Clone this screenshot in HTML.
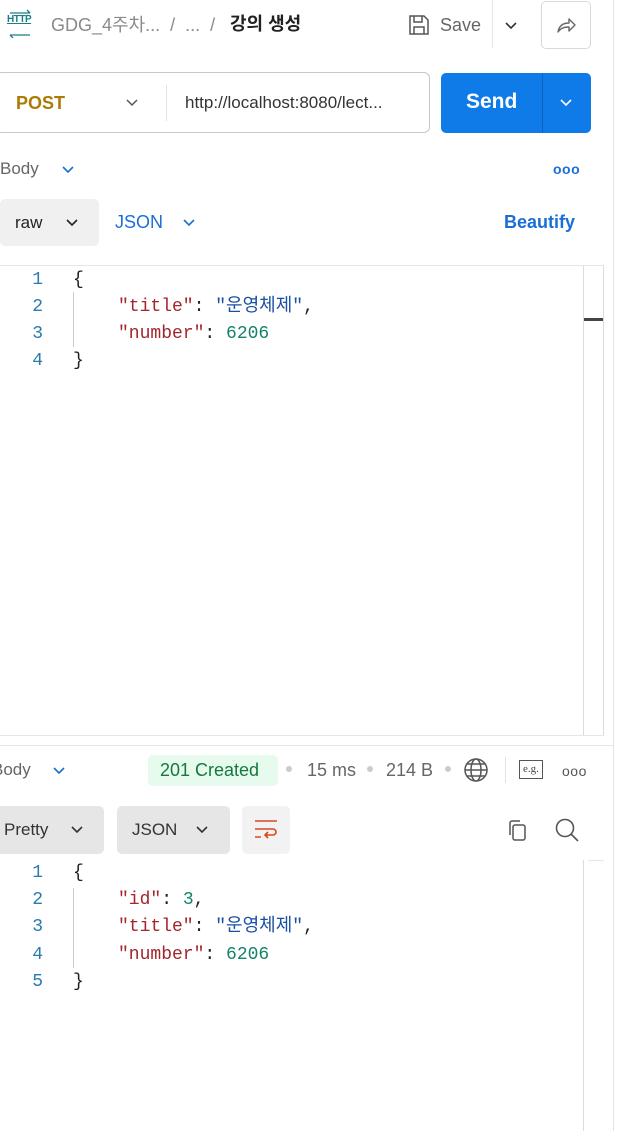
<!DOCTYPE html>
<html><head><meta charset="utf-8"><style>
*{margin:0;padding:0;box-sizing:border-box}
body{width:634px;height:1131px;background:#fff;position:relative;overflow:hidden;font-family:"Liberation Sans","Noto Sans CJK KR",sans-serif;color:#212121}
.a{position:absolute;line-height:22px}
.mono{font-family:"Liberation Mono","Noto Sans CJK KR",monospace;font-size:18px;white-space:pre;line-height:22px;height:22px}
.ln{position:absolute;width:30px;text-align:right;font-family:"Liberation Mono",monospace;font-size:18px;line-height:22px;color:#2a7ab0}
.k{color:#a3262c}.s{color:#1a4fa3}.n{color:#13836b}
svg{position:absolute}
</style></head><body>
<!-- top bar -->
<div class="a" style="left:7px;top:14px;font-size:10px;line-height:12px;color:#1c7d86;font-weight:bold;letter-spacing:-0.5px;text-decoration:underline">HTTP</div>
<svg style="left:6px;top:8px" width="28" height="30" viewBox="0 0 28 30"><path d="M4 5h20M21 2l3 3M24 27H4M7 30l-3-3" stroke="#1c7d86" stroke-width="1.3" fill="none"/></svg>
<div class="a" style="left:51px;top:14px;font-size:18px;color:#8a8a8a">GDG_4주차... &nbsp;/ &nbsp;... &nbsp;/</div>
<div class="a" style="left:230px;top:13px;font-size:18px;font-weight:bold;color:#212121">강의 생성</div>
<svg style="left:407px;top:13px" width="24" height="24" viewBox="0 0 24 24" fill="none" stroke="#555" stroke-width="1.5"><path d="M3 3h14l4 4v14H3z M7 3v6h8V3 M7 21v-7h10v7"/></svg>
<div class="a" style="left:440px;top:14px;font-size:18px;color:#666">Save</div>
<div class="a" style="left:492px;top:0;width:1px;height:48px;background:#e6e6e6"></div>
<svg style="left:503px;top:18px" width="16" height="16" viewBox="0 0 16 16"><path d="M3 5l5 5 5-5" stroke="#333" stroke-width="1.6" fill="none"/></svg>
<div class="a" style="left:541px;top:1px;width:50px;height:48px;border:1px solid #d9d9d9;border-radius:5px"></div>
<svg style="left:554px;top:13px" width="24" height="24" viewBox="0 0 24 24"><path d="M4 19c1-6 5-9 11-9V6l6 6-6 6v-4c-5 0-8 1-11 5z" stroke="#666" stroke-width="1.4" fill="none" stroke-linejoin="round"/></svg>
<div class="a" style="left:613px;top:0;width:1px;height:1131px;background:#e3e3e3"></div>
<!-- url bar -->
<div class="a" style="left:-4px;top:72px;width:434px;height:61px;border:1px solid #c8c8c8;border-radius:6px"></div>
<div class="a" style="left:16px;top:92px;font-size:18px;font-weight:bold;color:#ad7a03">POST</div>
<svg style="left:124px;top:95px" width="16" height="16" viewBox="0 0 16 16"><path d="M3 5l5 5 5-5" stroke="#555" stroke-width="1.5" fill="none"/></svg>
<div class="a" style="left:166px;top:85px;width:1px;height:36px;background:#e3e3e3"></div>
<div class="a" style="left:185px;top:92px;font-size:17px;color:#333">http://localhost:8080/lect...</div>
<div class="a" style="left:441px;top:73px;width:150px;height:60px;background:#0e7be8;border-radius:5px"></div>
<div class="a" style="left:466px;top:91px;font-size:21px;font-weight:bold;color:#fff">Send</div>
<div class="a" style="left:542px;top:73px;width:1px;height:60px;background:#0b63bd"></div>
<svg style="left:558px;top:95px" width="16" height="16" viewBox="0 0 16 16"><path d="M3 5l5 5 5-5" stroke="#fff" stroke-width="1.6" fill="none"/></svg>
<!-- body row -->
<div class="a" style="left:0;top:158px;font-size:17px;color:#666">Body</div>
<svg style="left:60px;top:162px" width="16" height="16" viewBox="0 0 16 16"><path d="M3 5l5 5 5-5" stroke="#1a6fd6" stroke-width="1.6" fill="none"/></svg>
<div class="a" style="left:553px;top:158px;font-size:14px;color:#1a6fd6;font-weight:bold;letter-spacing:0.5px">ooo</div>
<div class="a" style="left:0;top:199px;width:99px;height:47px;background:#f0f0f0;border-radius:5px"></div>
<div class="a" style="left:15px;top:212px;font-size:17px;color:#222">raw</div>
<svg style="left:64px;top:215px" width="16" height="16" viewBox="0 0 16 16"><path d="M3 5l5 5 5-5" stroke="#222" stroke-width="1.6" fill="none"/></svg>
<div class="a" style="left:115px;top:211px;font-size:18px;color:#1a6fd6">JSON</div>
<svg style="left:181px;top:215px" width="16" height="16" viewBox="0 0 16 16"><path d="M3 5l5 5 5-5" stroke="#1a6fd6" stroke-width="1.6" fill="none"/></svg>
<div class="a" style="left:504px;top:211px;font-size:18px;font-weight:bold;color:#1a6fd6">Beautify</div>
<!-- request editor -->
<div class="a" style="left:0;top:265px;width:604px;height:1px;background:#e6e6e6"></div>
<div class="a" style="left:583px;top:266px;width:1px;height:470px;background:#dcdcdc"></div>
<div class="a" style="left:603px;top:266px;width:1px;height:470px;background:#dcdcdc"></div>
<div class="a" style="left:584px;top:318px;width:19px;height:3px;background:#444"></div>
<div class="a" style="left:0;top:735px;width:604px;height:1px;background:#e6e6e6"></div>
<div class="a" style="left:73px;top:292px;width:1px;height:55px;background:#ccc"></div>
<div class="ln" style="left:13px;top:269px">1</div>
<div class="ln" style="left:13px;top:296px">2</div>
<div class="ln" style="left:13px;top:323px">3</div>
<div class="ln" style="left:13px;top:350px">4</div>
<div class="a mono" style="left:73px;top:269px">{</div>
<div class="a mono" style="left:118px;top:296px"><span class="k">"title"</span>: <span class="s">"운영체제"</span>,</div>
<div class="a mono" style="left:118px;top:323px"><span class="k">"number"</span>: <span class="n">6206</span></div>
<div class="a mono" style="left:73px;top:350px">}</div>
<!-- response -->
<div class="a" style="left:0;top:745px;width:614px;height:1px;background:#e6e6e6"></div>
<div class="a" style="left:-8px;top:759px;font-size:17px;color:#666">Body</div>
<svg style="left:51px;top:763px" width="16" height="16" viewBox="0 0 16 16"><path d="M3 5l5 5 5-5" stroke="#1a6fd6" stroke-width="1.6" fill="none"/></svg>
<div class="a" style="left:148px;top:755px;width:130px;height:31px;background:#e6faee;border-radius:5px"></div>
<div class="a" style="left:160px;top:759px;font-size:18px;color:#137a3c">201 Created</div>
<div class="a" style="left:286px;top:766px;width:6px;height:6px;border-radius:50%;background:#ccc"></div>
<div class="a" style="left:307px;top:759px;font-size:18px;color:#666">15 ms</div>
<div class="a" style="left:367px;top:766px;width:6px;height:6px;border-radius:50%;background:#ccc"></div>
<div class="a" style="left:386px;top:759px;font-size:18px;color:#666">214 B</div>
<div class="a" style="left:445px;top:766px;width:6px;height:6px;border-radius:50%;background:#ccc"></div>
<svg style="left:463px;top:757px" width="26" height="26" viewBox="0 0 26 26" fill="none" stroke="#555" stroke-width="1.5"><circle cx="13" cy="13" r="11"/><ellipse cx="13" cy="13" rx="5" ry="11"/><path d="M2 13h22M4 7h18M4 19h18"/></svg>
<div class="a" style="left:505px;top:757px;width:1px;height:26px;background:#e3e3e3"></div>
<div class="a" style="left:519px;top:760px;width:24px;height:19px;border:1.5px solid #555;font-size:11px;font-family:'Liberation Serif',serif;color:#444;text-align:center;line-height:16px">e.g.</div>
<div class="a" style="left:562px;top:760px;font-size:14px;color:#555;letter-spacing:0.5px">ooo</div>
<div class="a" style="left:-10px;top:806px;width:114px;height:48px;background:#e6e6e6;border-radius:5px"></div>
<div class="a" style="left:4px;top:819px;font-size:17px;color:#333">Pretty</div>
<svg style="left:69px;top:822px" width="16" height="16" viewBox="0 0 16 16"><path d="M3 5l5 5 5-5" stroke="#333" stroke-width="1.6" fill="none"/></svg>
<div class="a" style="left:117px;top:806px;width:113px;height:48px;background:#e6e6e6;border-radius:5px"></div>
<div class="a" style="left:132px;top:819px;font-size:17px;color:#333">JSON</div>
<svg style="left:194px;top:822px" width="16" height="16" viewBox="0 0 16 16"><path d="M3 5l5 5 5-5" stroke="#333" stroke-width="1.6" fill="none"/></svg>
<div class="a" style="left:242px;top:806px;width:48px;height:48px;background:#f2f2f2;border-radius:5px"></div>
<svg style="left:253px;top:818px" width="26" height="24" viewBox="0 0 26 24" fill="none" stroke="#d9461f" stroke-width="1.6"><path d="M2 3h22M2 11h18a3 3 0 010 6h-7M15 14l-3 3 3 3M2 19h6"/></svg>
<svg style="left:506px;top:818px" width="24" height="24" viewBox="0 0 24 24" fill="none" stroke="#555" stroke-width="1.5"><rect x="7" y="7" width="12" height="15" rx="2"/><path d="M4 17V5a2 2 0 012-2h8"/></svg>
<svg style="left:554px;top:817px" width="26" height="26" viewBox="0 0 26 26" fill="none" stroke="#555" stroke-width="1.6"><circle cx="11" cy="11" r="8.5"/><path d="M17 17l7 7"/></svg>
<div class="a" style="left:588px;top:860px;width:16px;height:1px;background:#e6e6e6"></div>
<div class="a" style="left:583px;top:860px;width:1px;height:271px;background:#dcdcdc"></div>
<div class="a" style="left:73px;top:888px;width:1px;height:80px;background:#ccc"></div>
<div class="ln" style="left:13px;top:862px">1</div>
<div class="ln" style="left:13px;top:889px">2</div>
<div class="ln" style="left:13px;top:916px">3</div>
<div class="ln" style="left:13px;top:944px">4</div>
<div class="ln" style="left:13px;top:971px">5</div>
<div class="a mono" style="left:73px;top:862px">{</div>
<div class="a mono" style="left:118px;top:889px"><span class="k">"id"</span>: <span class="n">3</span>,</div>
<div class="a mono" style="left:118px;top:916px"><span class="k">"title"</span>: <span class="s">"운영체제"</span>,</div>
<div class="a mono" style="left:118px;top:944px"><span class="k">"number"</span>: <span class="n">6206</span></div>
<div class="a mono" style="left:73px;top:971px">}</div>
</body></html>
